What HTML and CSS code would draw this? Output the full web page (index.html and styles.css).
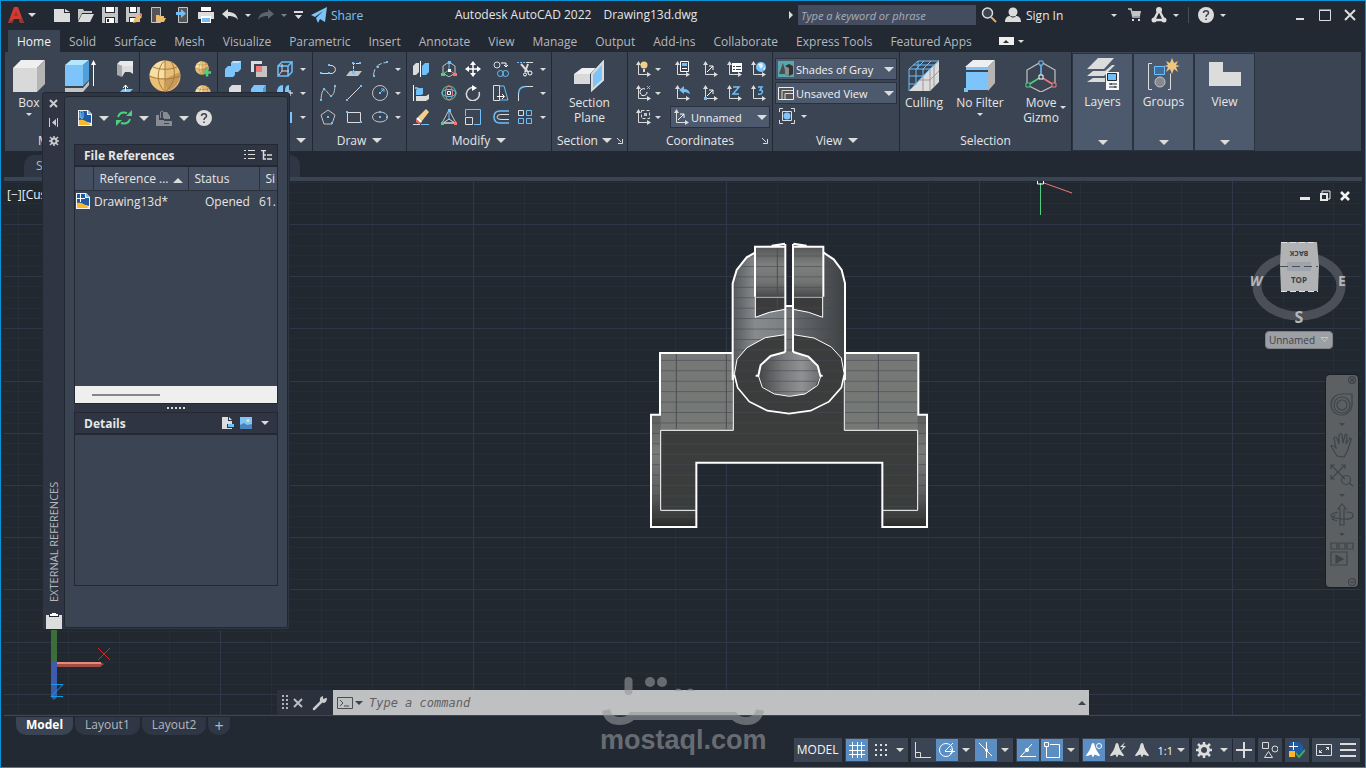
FILE: index.html
```html
<!DOCTYPE html>
<html lang="en">
<head>
    <meta charset="UTF-8">
    <meta name="viewport" content="width=device-width, initial-scale=1.0">
    <title>Autodesk AutoCAD 2022 - Drawing13d.dwg</title>
    <link rel="stylesheet" href="styles.css">
</head>
<body>
    <!-- shared icon shapes -->
    <svg class="defs" aria-hidden="true">
        <symbol id="axis" viewBox="0 0 16 16">
            <path d="M3.5 3v10.500h9.500" fill="none" stroke="#dcdcdc"/>
            <path d="M3.500 0l2.500 4h-5zM16 13.500l-4-2.500v5z" fill="#dcdcdc"/>
        </symbol>
        <symbol id="cube" viewBox="0 0 32 32">
            <path d="M0 8h24v24H0z" fill="#d9d9d9"/>
            <path d="M0 8L8 0h24l-8 8z" fill="#efefef"/>
            <path d="M24 8l8-8v24l-8 8z" fill="#b5b5b5"/>
        </symbol>
        <symbol id="globe" viewBox="0 0 32 32">
            <circle cx="16" cy="16" r="15.500" fill="#e9bf77"/>
            <path d="M16 .500C8 1 2 7 .500 15l7 3h9z" fill="#f6dfa4"/>
            <path d="M31 12c1 9-5 17-13 19l-2-12z" fill="#c89b5a"/>
            <path d="M.500 16c8 4 22 4 31 0M4 7c7 3 17 3 24 0M16 .500C7 8 7 24 16 31.500M16 .500v31M22 1c6 10 4 22-5 30" fill="none" stroke="#a97b3b"/>
        </symbol>
        <symbol id="person-a" viewBox="0 0 16 16">
            <path d="M8 0c2 0 2 4 3 6 1 3 3 5 5 8l-1 1-5-2c-1 0-1 3-2 3s-1-3-2-3l-5 2-1-1c2-3 4-5 5-8 1-2 1-6 3-6z"/>
        </symbol>
        <symbol id="dwg" viewBox="0 0 14 16">
            <path d="M0 0h10l4 4v12H0z" fill="#f2f2f2"/>
            <path d="M1 1h8v4h4v8L1 10z" fill="#1f5ba4"/>
            <path d="M1 10c4-1 8 1 12 5H1z" fill="#fdb827"/>
            <path d="M10 0l4 4h-4z" fill="#8ab8e6"/>
        </symbol>
    </svg>

    <div class="app">
        <header class="titlebar">
            <div class="quick">
                <button class="logo" aria-label="Application menu">
                    <svg width="16" height="17" viewBox="0 0 16 17"><path d="M0 16L6 0h4l6 16h-4l-1-4H6l-2 4z" fill="#d33a30"/><path d="M8 4l2 5H6zM0 16l3-3 3-1-2 4zM12 16l-1-4 3-1 2 5z" fill="#8c3a32"/></svg>
                    <i class="caret mid"></i>
                </button>
                <button aria-label="New"><svg width="16" height="16" viewBox="0 0 16 16"><path d="M0 2h10v4h6v9H0zM11 2l5 3h-5z" fill="#dcdcdc"/></svg></button>
                <button aria-label="Open"><svg width="16" height="16" viewBox="0 0 16 16"><path d="M0 14V2h5l1 2h8v2H4z" fill="#c4c4c4"/><path d="M4 7h12l-4 8H0z" fill="#dcdcdc"/></svg></button>
                <button aria-label="Save"><svg width="16" height="16" viewBox="0 0 16 16"><path d="M0 0h16v16H0z" fill="#c4c4c4"/><path d="M3 0h10v6H3zM3 10h10v6H3z" fill="#222933"/><path d="M4 0h8v5H4zM4 11h8v5H4z" fill="#fff"/><path d="M5 12h2v3H5z" fill="#222933"/></svg></button>
                <button aria-label="Save as"><svg width="16" height="16" viewBox="0 0 16 16"><path d="M0 0h14v15H0z" fill="#c4c4c4"/><path d="M3 0h8v6H3zM3 10h8v6H3z" fill="#222933"/><path d="M4 0h6v5H4zM4 11h5v4H4z" fill="#fff"/><path d="M7 16l1-4 5-5 3 3-5 5z" fill="#eebb6c"/><path d="M13 7l3 3 1-2-2-2z" fill="#f27878"/></svg></button>
                <button aria-label="Open from mobile"><svg width="16" height="16" viewBox="0 0 16 16"><path d="M1.500.500h9v15h-9z" fill="#555" stroke="#c4c4c4"/><path d="M6 15V8h3l1 1h4v2h2l-2 4z" fill="#eebb6c"/></svg></button>
                <button aria-label="Save to mobile"><svg width="16" height="16" viewBox="0 0 16 16"><path d="M4.500.500h9v15h-9z" fill="#555" stroke="#c4c4c4"/><path d="M2 5h5V2l5 4.500L7 11V8H2z" fill="#6fbff9"/></svg></button>
                <button aria-label="Plot"><svg width="16" height="16" viewBox="0 0 16 16"><path d="M3 0h10v4H3z" fill="#fff"/><path d="M0 5h16v7H0z" fill="#dcdcdc"/><path d="M3 9h10v7H3z" fill="#fff"/><path d="M4 11h8v4H4z" fill="#6fbff9"/></svg></button>
                <button aria-label="Undo"><svg width="16" height="16" viewBox="0 0 16 16"><path d="M0 7l6-5v3c5 0 9 2 10 8-2-3-5-4-10-4v3z" fill="#dcdcdc"/></svg></button>
                <button aria-label="Undo list" class="slim"><i class="caret mini"></i></button>
                <button aria-label="Redo"><svg width="16" height="16" viewBox="0 0 16 16"><path d="M16 7l-6-5v3C5 5 1 7 0 13c2-3 5-4 10-4v3z" fill="#5d646e"/></svg></button>
                <button aria-label="Redo list" class="slim"><i class="caret mini dim"></i></button>
                <button aria-label="Customize"><svg width="9" height="8" viewBox="0 0 9 8"><path d="M0 0h9v2H0zM1 4h7L4.500 8z" fill="#dcdcdc"/></svg></button>
                <button class="share"><svg width="16" height="16" viewBox="0 0 16 16"><path d="M0 8L16 0l-2 15-5-3-2 4-2-5 7-7-8 6z" fill="#7cc4f5"/></svg>Share</button>
            </div>
            <h1><span>Autodesk AutoCAD 2022</span><span>Drawing13d.dwg</span></h1>
            <div class="search">
                <i class="caret-right"></i>
                <input type="text" aria-label="Search help" placeholder="Type a keyword or phrase">
                <button aria-label="Search"><svg width="16" height="16" viewBox="0 0 16 16"><circle cx="6.500" cy="6" r="5" fill="#3c4450" stroke="#dcdcdc" stroke-width="1.500"/><path d="M10 10l5 5" stroke="#e9a85a" stroke-width="2"/></svg></button>
            </div>
            <button class="signin"><svg width="16" height="16" viewBox="0 0 16 16"><circle cx="8" cy="5" r="4.500" fill="#dcdcdc"/><path d="M0 15c0-5 3-6 5-6 2 2 4 2 6 0 2 0 5 1 5 6z" fill="#dcdcdc"/></svg><span>Sign In</span><i class="caret mini"></i></button>
            <div class="account">
                <button aria-label="App store"><svg width="14" height="14" viewBox="0 0 14 14"><path d="M0 1h3l2 8h7" fill="none" stroke="#c4c4c4" stroke-width="1.500"/><path d="M4 3h9l-1 5H5z" fill="#c4c4c4"/><path d="M4 11h2v2H4zM10 11h2v2h-2z" fill="#dcdcdc"/></svg></button>
                <button aria-label="Stay connected"><svg width="16" height="16" viewBox="0 0 16 16"><path d="M8 3L3 13h10z" fill="none" stroke="#dcdcdc" stroke-width="2.500"/><circle cx="8" cy="3" r="3" fill="#dcdcdc"/><circle cx="3" cy="13" r="2.500" fill="#dcdcdc"/><circle cx="13" cy="13" r="2.500" fill="#dcdcdc"/></svg><i class="caret mini"></i></button>
                <button aria-label="Help" class="help"><svg width="16" height="16" viewBox="0 0 16 16"><circle cx="8" cy="8" r="8" fill="#dcdcdc"/><path d="M5.500 6c0-3 5-3 5 0 0 2-2.500 1.500-2.500 4M8 11.500v1.500" fill="none" stroke="#3c4450" stroke-width="1.500"/></svg><i class="caret mini"></i></button>
            </div>
            <div class="window">
                <button aria-label="Minimize"><svg width="12" height="12" viewBox="0 0 12 12"><path d="M2 9h8v2H2z" fill="#dcdcdc"/></svg></button>
                <button aria-label="Maximize"><svg width="12" height="12" viewBox="0 0 12 12"><path d="M.500 1.500h11v10H.500zM0 1h12" fill="none" stroke="#dcdcdc"/></svg></button>
                <button aria-label="Close"><svg width="12" height="12" viewBox="0 0 12 12"><path d="M1 1l10 10M11 1L1 11" stroke="#dcdcdc" stroke-width="2"/></svg></button>
            </div>
        </header>

        <nav class="tabs">
            <a href="#home" class="active">Home</a>
            <a href="#solid">Solid</a>
            <a href="#surface">Surface</a>
            <a href="#mesh">Mesh</a>
            <a href="#visualize">Visualize</a>
            <a href="#parametric">Parametric</a>
            <a href="#insert">Insert</a>
            <a href="#annotate">Annotate</a>
            <a href="#view">View</a>
            <a href="#manage">Manage</a>
            <a href="#output">Output</a>
            <a href="#addins">Add-ins</a>
            <a href="#collaborate">Collaborate</a>
            <a href="#express">Express Tools</a>
            <a href="#featured">Featured Apps</a>
            <button class="collapse" aria-label="Minimize ribbon"><b><i class="caret-up"></i></b><i class="caret mini"></i></button>
        </nav>

        <div class="ribbon">
            <section class="panel modeling">
                <div class="body">
                    <button class="big"><svg width="32" height="32"><use href="#cube"/></svg>Box<i class="caret mini"></i></button>
                    <button class="big" aria-label="Extrude"><svg width="32" height="32" viewBox="0 0 32 32"><path d="M0 5h18v21H0z" fill="#7cc4f9"/><path d="M0 5l6-5h18l-6 5z" fill="#b4e7fb"/><path d="M18 5l6-5v20l-6 6z" fill="#4f9fd8"/><path d="M0 28h18l6-7v4l-6 7H0z" fill="#c4c4c4"/><path d="M28.500 26V3" stroke="#fff"/><path d="M28.500 0l2.500 5h-5z" fill="#fff"/></svg></button>
                    <div class="tools one">
                        <button aria-label="Polysolid"><svg width="16" height="16" viewBox="0 0 16 16"><path d="M0 3l5 2v11l-5-2z" fill="#a8a8a8"/><path d="M5 5h11v8l-3-2H8l-3 5z" fill="#dcdcdc"/><path d="M0 3l3-3h13v5H5z" fill="#e9e9e9"/></svg></button>
                        <button aria-label="Presspull"><svg width="16" height="16" viewBox="0 0 16 16"><path d="M2 8l4-4h10l-4 4v8H2z" fill="#7cc4f9"/><path d="M8.500 0v6M6 3l2.500-3L11 3" stroke="#fff" fill="none"/></svg></button>
                    </div>
                </div>
                <h2>Modeling<i class="caret"></i></h2>
            </section>

            <section class="panel mesh">
                <div class="body">
                    <button class="big" aria-label="Mesh sphere"><svg width="32" height="32"><use href="#globe"/></svg></button>
                    <div class="tools one">
                        <button aria-label="Smooth more"><svg width="16" height="16" viewBox="0 0 16 16"><use href="#globe" width="14" height="14"/><path d="M8 11.500h8M12 7.500v8" stroke="#4fd07c" stroke-width="2.500"/></svg></button>
                        <button aria-label="Smooth less"><svg width="16" height="16"><use href="#globe" width="16" height="16"/></svg></button>
                    </div>
                </div>
                <h2>Mesh<i class="caret"></i></h2>
            </section>

            <section class="panel solids">
                <div class="body tools">
                    <button aria-label="Union"><svg width="16" height="16" viewBox="0 0 16 16"><path d="M0 8l3-3h3V2l2-2h8v8l-3 3h-3v3l-2 2H0z" fill="#7cc4f9"/><path d="M6 2l2-2h8l-2 2z" fill="#b4e7fb"/></svg></button>
                    <button aria-label="Intersect"><svg width="16" height="16" viewBox="0 0 16 16"><path d="M0 0h11v11H0z" fill="#dcdcdc"/><path d="M5 5h11v11H5z" fill="#c4c4c4"/><path d="M3 3h8v8H3z" fill="#3b4453"/><path d="M5 5h6v6H5z" fill="#f27878"/></svg></button>
                    <button aria-label="Extract edges"><svg width="16" height="16" viewBox="0 0 16 16"><path d="M1 5h10v10H1zM1 5l4-4h10l-4 4M15 1v10l-4 4" fill="none" stroke="#6fbff9" stroke-width="1.500"/><path d="M5 3v7h7M5 10l-3 4" stroke="#dcdcdc" fill="none"/></svg></button>
                    <i class="caret mini"></i>
                    <button aria-label="Subtract"><svg width="16" height="16" viewBox="0 0 16 16"><path d="M4 3l3-3h9v9l-3 3H4z" fill="#dcdcdc"/><path d="M0 8h8v8H0z" fill="#6fbff9"/></svg></button>
                    <button aria-label="Interfere"><svg width="16" height="16" viewBox="0 0 16 16"><path d="M0 4l3-4h12l-3 4v12H0z" fill="#7cc4f9"/><path d="M12 4l3-4v11l-3 5z" fill="#4f9fd8"/></svg></button>
                    <button aria-label="Fillet edge"><svg width="16" height="16" viewBox="0 0 16 16"><path d="M0 16V8q0-8 6-8v16zM8 16V6q0-6 4-6v16z" fill="#7cc4f9"/><path d="M10 8h6M13 5v6" stroke="#fff"/></svg></button>
                    <i class="caret mini"></i>
                    <button aria-label="Slice"><svg width="16" height="16"><use href="#cube" width="16" height="16"/></svg></button>
                    <button aria-label="Thicken"><svg width="16" height="16"><use href="#cube" width="16" height="16"/></svg></button>
                    <button aria-label="Shell"><svg width="16" height="16" viewBox="0 0 16 16"><path d="M0 3h15v11H0z" fill="#7cc4f9"/></svg></button>
                    <i class="caret mini"></i>
                </div>
                <h2 class="end"><i class="caret"></i></h2>
            </section>

            <section class="panel draw">
                <div class="body tools">
                    <button aria-label="Polyline"><svg width="16" height="16" viewBox="0 0 16 16"><path d="M0 12.500h9M9 4.500h3q3.500 1 3.500 4t-3.500 4H9" fill="none" stroke="#dcdcdc"/><path d="M0 11h2v2H0zM8 11h2v2H8zM8 3h2v2H8z" fill="#6fbff9"/></svg></button>
                    <button aria-label="3D polyline"><svg width="16" height="16" viewBox="0 0 16 16"><path d="M0 15l4-5h12l-4 5z" fill="#c4c4c4"/><path d="M7.500 12V2.500H14" fill="none" stroke="#dcdcdc" stroke-dasharray="3 1"/><path d="M6 10h3v3H6zM6 1h2v2H6zM13 1h2v2h-2z" fill="#6fbff9"/></svg></button>
                    <button aria-label="Arc"><svg width="16" height="16" viewBox="0 0 16 16"><path d="M1.500 15Q2 2 15 1.500" fill="none" stroke="#c4c4c4" stroke-dasharray="7 2"/><path d="M1 14h2v2H1zM5 5h2v2H5zM14 0h2v2h-2z" fill="#6fbff9"/></svg></button>
                    <i class="caret mini"></i>
                    <button aria-label="Spline"><svg width="16" height="16" viewBox="0 0 16 16"><path d="M1 15C2 0 6 5 8 8s6 6 7-7" fill="none" stroke="#c4c4c4"/><path d="M0 14h2v2H0zM3 3h2v2H3zM10 10h2v2h-2zM14 0h2v2h-2z" fill="#6fbff9"/></svg></button>
                    <button aria-label="Line"><svg width="16" height="16" viewBox="0 0 16 16"><path d="M1 15L15 1" stroke="#dcdcdc"/><path d="M0 14h2v2H0zM14 0h2v2h-2z" fill="#6fbff9"/></svg></button>
                    <button aria-label="Circle"><svg width="16" height="16" viewBox="0 0 16 16"><circle cx="8" cy="8" r="7.500" fill="none" stroke="#c4c4c4"/><path d="M8 8l4-4M9 4h3v3" fill="none" stroke="#6fbff9"/><path d="M7 7h2v2H7z" fill="#6fbff9"/></svg></button>
                    <i class="caret mini"></i>
                    <button aria-label="Polygon"><svg width="16" height="16" viewBox="0 0 16 16"><path d="M8 1l7 5-3 9H4L1 6z" fill="none" stroke="#c4c4c4"/><path d="M7 7h2v2H7zM11 13h2v2h-2z" fill="#6fbff9"/></svg></button>
                    <button aria-label="Rectangle"><svg width="16" height="16" viewBox="0 0 16 16"><path d="M1.500 3.500h13v10h-13z" fill="none" stroke="#dcdcdc"/><path d="M0 2h2v2H0zM14 12h2v2h-2z" fill="#6fbff9"/></svg></button>
                    <button aria-label="Ellipse"><svg width="16" height="16" viewBox="0 0 16 16"><ellipse cx="8" cy="8" rx="7.500" ry="5" fill="none" stroke="#c4c4c4"/><path d="M7 7h2v2H7zM7 2h2v2H7zM14 7h2v2h-2z" fill="#6fbff9"/></svg></button>
                    <i class="caret mini"></i>
                </div>
                <h2>Draw<i class="caret"></i></h2>
            </section>

            <section class="panel modify">
                <div class="body tools">
                    <button aria-label="3D mirror"><svg width="16" height="16" viewBox="0 0 16 16"><path d="M0 5l3-3h3v9l-3 3H0z" fill="#dcdcdc"/><path d="M9 5l3-3h4v9l-3 3H9z" fill="#6fbff9"/><path d="M7.500 0v16" stroke="#fff"/></svg></button>
                    <button aria-label="3D move"><svg width="16" height="16" viewBox="0 0 16 16"><path d="M8 1l6 4v7l-6 4-6-4V5z" fill="none" stroke="#c4c4c4"/><path d="M8 1v8" stroke="#6fbff9"/><path d="M8 9l-6 4" stroke="#4fd07c"/><path d="M8 9l6 4" stroke="#f27878"/><path d="M7 0h3v3H7z" fill="#6fbff9"/><path d="M0 12h4v3H0z" fill="#4fd07c"/><path d="M12 12h4v3h-4z" fill="#f27878"/><path d="M7 8h3v3H7z" fill="#fff"/></svg></button>
                    <button aria-label="Move"><svg width="16" height="16" viewBox="0 0 16 16"><path d="M8 2v12M2 8h12" stroke="#fff" stroke-width="1.500"/><path d="M8 0l3 4H5zM8 16l3-4H5zM0 8l4-3v6zM16 8l-4-3v6z" fill="#fff"/></svg></button>
                    <button aria-label="Copy"><svg width="16" height="16" viewBox="0 0 16 16"><circle cx="4" cy="4" r="3" fill="none" stroke="#dcdcdc"/><circle cx="7.500" cy="12.500" r="3" fill="none" stroke="#6fbff9"/><circle cx="12.500" cy="12.500" r="3" fill="none" stroke="#6fbff9"/><path d="M8 2h5v4M11 4l2 2 2-2" fill="none" stroke="#fff"/></svg></button>
                    <button aria-label="Trim"><svg width="16" height="16" viewBox="0 0 16 16"><path d="M0 1.500h8" stroke="#6fbff9" stroke-dasharray="2 1"/><path d="M9 1.500h7" stroke="#dcdcdc"/><path d="M4 3l7 8M11 3L8 11" stroke="#dcdcdc" stroke-width="2"/><circle cx="8" cy="13.500" r="1.500" fill="none" stroke="#fff"/><circle cx="13" cy="12" r="2" fill="none" stroke="#fff"/></svg></button>
                    <i class="caret mini"></i>
                    <button aria-label="3D align"><svg width="16" height="16" viewBox="0 0 16 16"><path d="M.500 0v16M2 3h3" stroke="#fff"/><path d="M3 5l2-2h5v6l-2 1H3z" fill="#6fbff9"/><path d="M3 11h10l3-2v5l-3 2H3z" fill="#dcdcdc"/></svg></button>
                    <button aria-label="3D rotate"><svg width="16" height="16" viewBox="0 0 16 16"><circle cx="8" cy="8" r="7" fill="none" stroke="#4fd07c"/><ellipse cx="8" cy="8" rx="3.500" ry="7" fill="none" stroke="#f27878"/><ellipse cx="8" cy="8" rx="7" ry="3.500" fill="none" stroke="#6fbff9"/><path d="M6.500 6.500h3v3h-3z" fill="none" stroke="#fff"/></svg></button>
                    <button aria-label="Rotate"><svg width="16" height="16" viewBox="0 0 16 16"><path d="M10 3A6.500 6.500 0 1 0 14 7" fill="none" stroke="#dcdcdc" stroke-width="1.500"/><path d="M7 0l5 3-5 3z" fill="#fff"/></svg></button>
                    <button aria-label="Stretch"><svg width="16" height="16" viewBox="0 0 16 16"><path d="M.500.500h6v15h-6z" fill="none" stroke="#dcdcdc"/><path d="M7 1h4l4 14H7" fill="none" stroke="#6fbff9"/><path d="M4 11.500h7M9 9l2.500 2.500L9 14" fill="none" stroke="#fff"/></svg></button>
                    <button aria-label="Fillet"><svg width="16" height="16" viewBox="0 0 16 16"><path d="M9 1.500h7M1.500 9v7" stroke="#dcdcdc"/><path d="M9 1.500Q1.500 1.500 1.500 9" fill="none" stroke="#6fbff9" stroke-width="1.500"/></svg></button>
                    <i class="caret mini"></i>
                    <button aria-label="Erase"><svg width="16" height="16" viewBox="0 0 16 16"><path d="M5 8l8-8 3 3-7 9z" fill="#f3cf8b"/><path d="M5 8l4 4-1 2-5-4z" fill="#fff"/><path d="M3 10l5 4-2 1-3-2z" fill="#ee6b60"/><path d="M0 15.500h7" stroke="#dcdcdc"/><path d="M8 15.500h8" stroke="#6fbff9"/></svg></button>
                    <button aria-label="3D scale"><svg width="16" height="16" viewBox="0 0 16 16"><path d="M8 1L1 14h14z" fill="none" stroke="#c4c4c4"/><path d="M8 2v8" stroke="#6fbff9"/><path d="M8 10l-6 4h12z" fill="none" stroke="#dcdcdc"/><path d="M7 0h3v3H7z" fill="#6fbff9"/><path d="M0 13h3v3H0z" fill="#4fd07c"/><path d="M13 13h3v3h-3z" fill="#f27878"/></svg></button>
                    <button aria-label="Scale"><svg width="16" height="16" viewBox="0 0 16 16"><path d="M.500 7V.500h15v15H9" fill="none" stroke="#6fbff9"/><path d="M.500 8.500h7v7h-7z" fill="none" stroke="#dcdcdc"/></svg></button>
                    <button aria-label="Offset"><svg width="16" height="16" viewBox="0 0 16 16"><path d="M16 2H7q-6 0-6 6t6 6h9" fill="none" stroke="#6fbff9" stroke-width="1.500"/><path d="M16 5.500H8q-4 0-4 2.500t4 2.500h8" fill="none" stroke="#dcdcdc"/></svg></button>
                    <button aria-label="Array"><svg width="16" height="16" viewBox="0 0 16 16"><path d="M1.500 1.500h5v5h-5z" fill="none" stroke="#dcdcdc"/><path d="M9.500 1.500h5v5h-5zM1.500 9.500h5v5h-5zM9.500 9.500h5v5h-5z" fill="none" stroke="#6fbff9"/></svg></button>
                    <i class="caret mini"></i>
                </div>
                <h2>Modify<i class="caret"></i></h2>
            </section>

            <section class="panel section">
                <div class="body">
                    <button class="big"><svg width="32" height="32" viewBox="0 0 32 32"><path d="M1 14h16v10H1z" fill="#d9d9d9"/><path d="M1 14l8-6h14l-6 6z" fill="#efefef"/><path d="M19 14L30 2v18L19 30z" fill="#7cc4f9" stroke="#dcdcdc" stroke-width="2"/></svg>Section<br>Plane</button>
                </div>
                <h2>Section<i class="caret"></i><svg class="launch" width="6" height="6" viewBox="0 0 6 6"><path d="M0 0l4 4M5.500 1v4.500H1" fill="none" stroke="#dcdcdc"/></svg></h2>
            </section>

            <section class="panel coords">
                <div class="body tools">
                    <button aria-label="UCS icon"><svg width="16" height="16" viewBox="0 0 16 16"><use href="#axis"/><circle cx="9" cy="4" r="3.500" fill="#f2cf86"/><path d="M8 8h2v3H8z" fill="#dcdcdc"/></svg></button>
                    <i class="caret mini"></i>
                    <button aria-label="UCS"><svg width="16" height="16" viewBox="0 0 16 16"><use href="#axis"/><path d="M6.500.500h8v10h-8z" fill="#3b4453" stroke="#fff"/><path d="M8 2h5v3H8z" fill="#6fbff9"/><path d="M8 7.500h5" stroke="#fff"/></svg></button>
                    <button aria-label="UCS view"><svg width="16" height="16" viewBox="0 0 16 16"><use href="#axis"/><path d="M5 11l6-6M7 5h4v4" fill="none" stroke="#fff"/></svg></button>
                    <button aria-label="Named UCS"><svg width="16" height="16" viewBox="0 0 16 16"><use href="#axis"/><path d="M6 2h10v9H6z" fill="#fff"/><path d="M7 5.500h2M10 5.500h5M7 8.500h2M10 8.500h5" stroke="#3b4453"/></svg></button>
                    <button aria-label="World UCS"><svg width="16" height="16" viewBox="0 0 16 16"><use href="#axis"/><circle cx="11" cy="6" r="5" fill="#7cc4f9"/><path d="M8 3l4-1 1 3-2 3zM13 8l2-2v3z" fill="#dff3fd"/></svg></button>
                    <button aria-label="Rotate UCS"><svg width="16" height="16" viewBox="0 0 16 16"><use href="#axis"/><path d="M10 4a3.500 3.500 0 1 0 2 3" fill="none" stroke="#fff"/><path d="M12 1l3 3M15 1l-3 3" stroke="#6fbff9"/></svg></button>
                    <i class="caret mini"></i>
                    <button aria-label="Previous UCS"><svg width="16" height="16" viewBox="0 0 16 16"><use href="#axis"/><path d="M5 5l5-4v3q5 0 6 5-3-2-6-2v2z" fill="#6fbff9"/></svg></button>
                    <button aria-label="Origin"><svg width="16" height="16" viewBox="0 0 16 16"><use href="#axis"/><path d="M5 11l6-6M7 5h4v4" fill="none" stroke="#fff"/><path d="M2 12h3v3H2z" fill="#6fbff9"/></svg></button>
                    <button aria-label="Z axis"><svg width="16" height="16" viewBox="0 0 16 16"><use href="#axis"/><path d="M7 2h6L7 9h6" fill="none" stroke="#6fbff9" stroke-width="1.500"/></svg></button>
                    <button aria-label="3 point"><svg width="16" height="16" viewBox="0 0 16 16"><use href="#axis"/><path d="M8 2h4L10 5c4 0 3 5-2 4" fill="none" stroke="#6fbff9" stroke-width="1.500"/></svg></button>
                    <button aria-label="UCS object"><svg width="16" height="16" viewBox="0 0 16 16"><use href="#axis"/><path d="M6.500 1.500h8v8h-8z" fill="none" stroke="#dcdcdc" stroke-dasharray="3 2"/><path d="M9 4h3v3H9z" fill="#c4c4c4"/></svg></button>
                    <i class="caret mini"></i>
                    <label class="combo"><svg width="16" height="16" viewBox="0 0 16 16"><use href="#axis"/><path d="M5 11l6-6M7 5h4v4" fill="none" stroke="#fff"/></svg><select aria-label="UCS name"><option>Unnamed</option></select><i class="caret"></i></label>
                </div>
                <h2>Coordinates<svg class="launch" width="6" height="6" viewBox="0 0 6 6"><path d="M0 0l4 4M5.500 1v4.500H1" fill="none" stroke="#dcdcdc"/></svg></h2>
            </section>

            <section class="panel views">
                <div class="body">
                    <label class="combo"><svg width="16" height="16" viewBox="0 0 16 16"><path d="M0 0h16v16H0z" fill="#58a6ae"/><path d="M1 13L5 2l3 11z" fill="#4b4d4f"/><path d="M7 5l4-2 4 2v8l-4 2-4-2z" fill="#333"/><path d="M7 5l4 2v8l-4-2z" fill="#8b8b8b"/></svg><select aria-label="Visual style"><option>Shades of Gray</option></select><i class="caret"></i></label>
                    <label class="combo"><svg width="16" height="16" viewBox="0 0 16 16"><path d="M.500 2.500h15v12H.500z" fill="#555" stroke="#efefef"/><path d="M4 14V5.500h11M7 14V8.500h8" fill="none" stroke="#dcdcdc"/></svg><select aria-label="View name"><option>Unsaved View</option></select><i class="caret"></i></label>
                    <button class="iso" aria-label="Isolate"><svg width="16" height="16" viewBox="0 0 16 16"><path d="M.500 4V.500H4M12 .500h3.500V4M15.500 12v3.500H12M4 15.500H.500V12M3.500 3.500h9v9h-9z" fill="none" stroke="#dcdcdc"/><circle cx="8" cy="8" r="3.500" fill="#7cc4f9"/></svg><i class="caret mini"></i></button>
                </div>
                <h2>View<i class="caret"></i></h2>
            </section>

            <section class="panel selection">
                <div class="body">
                    <button class="big"><svg width="32" height="32" viewBox="0 0 32 32"><path d="M22 9L1 31h21zM22 9l9-9v22l-9 9z" fill="#dcdcdc"/><path d="M1 9h21v0L1 31zM1 9l9-8h21l-9 8M8 9v16M15 9v8M1 16h14M1 24h7M8 9l8-8M15 9l8-8M5 5h21M10 1v8" fill="none" stroke="#6fbff9"/><path d="M22 9v22M15 17v14M12 20h10l9-9M26 5v22" fill="none" stroke="#9a9a9a"/></svg>Culling</button>
                    <button class="big"><svg width="32" height="32" viewBox="0 0 32 32"><path d="M1 7l8-7h22l-7 7z" fill="#efefef"/><path d="M24 7l7-7v23l-7 8z" fill="#b5b5b5"/><path d="M2 7h22v3H2zM2 12h22v18H2zM0 28h4v4H0z" fill="#7cc4f9"/></svg>No Filter<i class="caret mini"></i></button>
                    <button class="big"><svg width="32" height="32" viewBox="0 0 32 32"><path d="M16 2l14 8v15l-14 7-14-7V10z" fill="none" stroke="#c4c4c4" stroke-width="1.200"/><path d="M16 4v12" stroke="#6fbff9" stroke-width="1.500"/><path d="M16 17L3 25" stroke="#4fd07c" stroke-width="1.500"/><path d="M16 17l13 8" stroke="#f27878" stroke-width="1.500"/><g fill="#3b4453"><path d="M14 1h4v4h-4z" stroke="#6fbff9"/><path d="M1 23h4v4H1z" stroke="#4fd07c"/><path d="M27 23h4v4h-4z" stroke="#f27878"/><path d="M14 15h4v4h-4z" stroke="#fff"/></g></svg>Move<br>Gizmo<i class="caret mini side"></i></button>
                </div>
                <h2>Selection</h2>
            </section>

            <button class="folded"><svg width="32" height="32" viewBox="0 0 32 32"><path d="M0 11L11 0h16L17 11zM0 18l6-5h12l7-6h3L17 18zM0 24l6-4h12v4z" fill="#dcdcdc"/><path d="M19 14h13v18H19z" fill="#f6f6f6"/><path d="M20.500 15.500h9v7h-9z" fill="#6fbff9" stroke="#222933"/><path d="M22 26h8M22 29h8M24 25v2M28 28v2" stroke="#222933"/></svg>Layers<i class="caret"></i></button>
            <button class="folded"><svg width="32" height="32" viewBox="0 0 32 32"><path d="M4 5.500H.500v26H4M20 31.500h2.500v-16" fill="none" stroke="#dcdcdc"/><path d="M6.500 8.500h10v8h-10z" fill="#3f6d9e" stroke="#6fbff9"/><circle cx="12" cy="24" r="5" fill="#868a8f" stroke="#c4c4c4"/><path d="M24 0l2 5 4-2-2 4 4 1-4 1 2 5-4-3-2 5-2-5-4 3 2-5-4-1 4-1-2-4 4 2z" fill="#f0c67e"/></svg>Groups<i class="caret"></i></button>
            <button class="folded"><svg width="32" height="32" viewBox="0 0 32 32"><path d="M0 4h14v10h18v14H0z" fill="#dcdcdc"/></svg>View<i class="caret"></i></button>
        </div>

        <div class="filetabs">
            <a href="#start">Start</a>
            <a href="#drawing13d" class="current" aria-label="Drawing13d"></a>
            <button aria-label="New drawing">+</button>
        </div>

        <main class="viewport">
            <svg class="grid" width="100%" height="100%">
                <defs>
                    <pattern id="lines" x="216" y="43" width="253" height="261" patternUnits="userSpaceOnUse">
                        <path d="M51 0h1v261h-1zM101 0h1v261h-1zM152 0h1v261h-1zM202 0h1v261h-1z" fill="#272e39"/>
                        <path d="M0 10h253M0 21h253M0 31h253M0 42h253M0 62h253M0 73h253M0 84h253M0 94h253M0 114h253M0 125h253M0 136h253M0 146h253M0 167h253M0 177h253M0 188h253M0 199h253M0 219h253M0 229h253M0 240h253M0 251h253" transform="translate(0 .5)" stroke="#262d38"/>
                        <path d="M0 0h253v1H0zM0 52h253v1H0zM0 104h253v1H0zM0 157h253v1H0zM0 209h253v1H0zM0 0h1v261H0z" fill="#303748"/>
                    </pattern>
                </defs>
                <rect width="100%" height="100%" fill="url(#lines)"/>
            </svg>

            <!-- crosshair -->
            <svg class="cross" width="36" height="34" viewBox="0 0 36 34"><path d="M4.500 2v32" stroke="#4fd07c"/><path d="M8 2l28 10" stroke="#f27878"/><path d="M1.500 0v3h6V0" fill="none" stroke="#fff"/></svg>

            <!-- clamp bracket, front view -->
            <svg class="model" width="320" height="310" viewBox="0 0 960 930">
                <defs>
                    <linearGradient id="arch"><stop offset="0" stop-color="#56585b"/><stop offset=".2" stop-color="#888b8c"/><stop offset=".45" stop-color="#7d8082"/><stop offset=".58" stop-color="#62666a"/><stop offset=".8" stop-color="#505356"/><stop offset="1" stop-color="#3f4143"/></linearGradient>
                    <linearGradient id="lug" x2="0" y2="1"><stop offset="0" stop-color="#545556"/><stop offset=".35" stop-color="#7d7f7d"/><stop offset=".7" stop-color="#727473"/><stop offset="1" stop-color="#46474a"/></linearGradient>
                    <linearGradient id="bore"><stop offset="0" stop-color="#444547"/><stop offset=".4" stop-color="#777879"/><stop offset=".7" stop-color="#909192"/><stop offset="1" stop-color="#6c6d6e"/></linearGradient>
                    <linearGradient id="foot" x2="0" y2="1"><stop offset="0" stop-color="#5c5d5d"/><stop offset=".35" stop-color="#7a7b7b"/><stop offset=".7" stop-color="#5c5d5e"/><stop offset="1" stop-color="#292a29"/></linearGradient>
                    <pattern id="rules" x="0" y="14" width="960" height="31.300" patternUnits="userSpaceOnUse"><path d="M0 0h960v3H0z" fill="#434855" opacity=".6"/></pattern>
                    <clipPath id="solid"><path d="M62 554h28V368h218V160l12-40 30-38 24-14V50l50-7h41v184h22V40l94 10v18l54 52 10 40v208h222v186h27v337H756V698H199v193H62z"/></clipPath>
                </defs>
                <path d="M308 480V160l12-40 30-38 25-14V50h90v177h22V50h93v18l30 20 25 32 12 40v320z" fill="url(#arch)"/>
                <path d="M375 50h90v152h-90zM490 50h90v152h-90z" fill="url(#lug)"/>
                <path d="M376 202h89v36q-50 4-89 24zM490 202h88v60q-40-20-88-24z" fill="#3a3b3a"/>
                <path d="M466 228h24v140h-24z" fill="#6e7071"/>
                <path d="M90 368h220v233H90zM645 368h220v233H645z" fill="#767876"/>
                <path d="M62 554h30v287h107v50H62zM863 554h29v337H756v-50h107z" fill="url(#foot)"/>
                <path d="M312 433h331v168h220v240H757V698H197v143H92V601h220z" fill="#3b3d3c"/>
                <path d="M313 433l8-45 30-35 55-30 59-9v50l-50 17-28 32-5 25 12 35 36 20 46 6 46-6 38-26 12-30-6-28-30-30-46-18v-47l62 10 55 27 25 33 12 49-10 40-37 42-55 27-65 8-66-8-55-27-33-35z" fill="#3b3d3c"/>
                <path d="M385 437l3-30 28-30 50-12h24l50 15 28 30 3 27-17 37-35 20-42 4-46-6-32-25z" fill="url(#bore)"/>
                <rect width="960" height="930" fill="url(#rules)" clip-path="url(#solid)"/>
                <path d="M139 368v230M745 368v230M289 368v230M442 52v180" stroke="#4b4e55" stroke-width="3"/>
                <g fill="none" stroke="#fff" stroke-width="3">
                    <path d="M376 202h89M490 202h89" stroke="#b5b5b5"/>
                    <path d="M376 200v62q40-18 89-24M578 200v62q-40-18-88-24"/>
                    <path d="M310 433v168H92v240h105M643 433v168h220v240H757"/>
                    <path d="M313 433l8-45 30-35 55-30 59-9M490 314l62 10 52 27 30 33 9 49"/>
                    <path d="M385 437l12 35 36 20 46 7 46-7 38-26 10-30"/>
                </g>
                <g fill="none" stroke="#fff" stroke-width="6">
                    <path d="M308 450V160l12-40 30-38 25-14M581 68l30 20 24 32 10 40v290"/>
                    <path d="M375 200V50h91M580 200V50h-92M466 42v324M489 42v324M466 228h24M425 47l40-6M490 41l40 6"/>
                    <path d="M308 369H90v185H63v337h136V698h558v193h134V554h-26V369H646"/>
                    <path d="M466 366l-44 12-30 27-7 32h-8M489 366l46 14 28 27 8 30h7"/>
                    <path d="M313 433l10 40 35 42 54 27 65 9 65-9 55-27 37-42 9-40" stroke-width="5"/>
                </g>
            </svg>

            <!-- ucs icon -->
            <svg class="ucs" width="64" height="72" viewBox="0 0 64 72"><path d="M1 0h6v33H1z" fill="#3c6e3c"/><path d="M7 32h43l4 2-4 3H7z" fill="#a34d45"/><path d="M7 33h44" stroke="#e48a7c" stroke-width="2"/><path d="M1 32h6v35l-3 3-3-3z" fill="#3d5cae"/><path d="M48 18l12 12M60 18L48 30" stroke="#e0201c"/><path d="M1 54.500h12L1 66.500h12" fill="none" stroke="#0d9ee8"/></svg>

            <p class="viewlabel">[&minus;][Custom View]</p>

            <div class="doccontrols">
                <button aria-label="Minimize drawing"><svg width="12" height="12" viewBox="0 0 12 12"><path d="M1 7h10v3H1z" fill="#e6e6e6"/></svg></button>
                <button aria-label="Restore drawing"><svg width="12" height="12" viewBox="0 0 12 12"><path d="M3 3V1h8v8H9" fill="none" stroke="#e6e6e6"/><path d="M2 4h6v6H2z" fill="none" stroke="#e6e6e6" stroke-width="2"/></svg></button>
                <button aria-label="Close drawing"><svg width="12" height="12" viewBox="0 0 12 12"><path d="M2 2l8 8M10 2l-8 8" stroke="#f2f2f2" stroke-width="2.500"/></svg></button>
            </div>

            <svg class="viewcube" width="100" height="90" viewBox="0 0 100 90">
                <ellipse cx="50" cy="46" rx="42" ry="30" fill="none" stroke="#4b4f57" stroke-width="9"/>
                <path d="M32 2h36l2 24-1 25H32l-1-25z" fill="#b1b2b3"/>
                <path d="M38 22h24v9H38z" fill="#9fa3ab"/>
                <path d="M31 26.500h38" stroke="#4a4e55" stroke-dasharray="8 4"/>
                <path d="M32 2.500h36M32 51.500h37" stroke="#e0e0e0" stroke-dasharray="6 3"/>
                <g font-family="Open Sans, sans-serif" font-weight="700" text-anchor="middle">
                    <text x="50" y="17" font-size="7" fill="#3b3f46" transform="rotate(180 50 14)">BACK</text>
                    <text x="50" y="43" font-size="8" fill="#3b3f46">TOP</text>
                    <text x="7" y="46" font-size="14" font-style="italic" fill="#b5b7ba">W</text>
                    <text x="93" y="46" font-size="14" fill="#b5b7ba">E</text>
                    <text x="50" y="83" font-size="16" fill="#b5b7ba">S</text>
                </g>
            </svg>
            <button class="wcs">Unnamed<svg width="9" height="6" viewBox="0 0 9 6"><path d="M1 .500h7l-3.500 4z" fill="none" stroke="#c8c8b8"/></svg></button>

            <div class="navbar">
                <svg class="dot" width="8" height="8" viewBox="0 0 8 8"><circle cx="4" cy="4" r="3.500"/><path d="M2 2l4 4M6 2L2 6"/></svg>
                <button aria-label="Steering wheel" class="wheel"><svg width="24" height="24" viewBox="0 0 24 24"><path d="M12 1h10v11a10.500 10.500 0 1 1-10-11z"/><circle cx="12" cy="12" r="8"/><circle cx="12" cy="12" r="5"/></svg></button>
                <i class="caret mini"></i>
                <button aria-label="Pan"><svg width="24" height="26" viewBox="0 0 24 26"><path d="M7 24L1 14q1-2 5 2L4 6q1-2 3 0l2 6V3q2-3 3 0l1 8 2-8q2-2 2 1l-1 8 4-6q2 0 1 2l-4 12-3 5z"/></svg></button>
                <button aria-label="Zoom"><svg width="24" height="24" viewBox="0 0 24 24"><path d="M1 1l14 14M15 1L1 15M1 5V1h4M11 1h4v4M1 11v4h4M19 19l4 3" /><circle cx="16" cy="16" r="4.500"/></svg></button>
                <i class="caret mini"></i>
                <button aria-label="Orbit"><svg width="24" height="24" viewBox="0 0 24 24"><path d="M12 1l4 5h-2v16h-4V6H8zM8 9q-8 2-7 4t11 3 11-3-7-4M5 12l-3 4 5 2"/></svg></button>
                <i class="caret mini"></i>
                <button aria-label="Show motion"><svg width="24" height="24" viewBox="0 0 24 24"><path d="M1 1h6v6H1zM9 1h6v6H9zM17 1h6v6h-6zM1 10h16v13H1z"/><path d="M6 13l7 4-7 4z" class="play"/></svg></button>
                <svg class="dot last" width="8" height="8" viewBox="0 0 8 8"><circle cx="4" cy="4" r="3.500"/><path d="M2 4h4"/></svg>
            </div>

            <div class="cmdline">
                <i class="grip"></i>
                <button aria-label="Close command line"><svg width="10" height="10" viewBox="0 0 10 10"><path d="M1 1l8 8M9 1L1 9" stroke="#b9bcc0" stroke-width="2"/></svg></button>
                <button aria-label="Customize command line"><svg width="16" height="16" viewBox="0 0 16 16"><path d="M2 14l7-7" stroke="#c9cbcd" stroke-width="2.500" stroke-linecap="round"/><path d="M14 3l-3 1V1q-4 1-3 5l3 2q4 0 4-5z" fill="#c9cbcd"/></svg></button>
                <div class="field">
                    <svg width="16" height="12" viewBox="0 0 16 12"><path d="M.500.500h15v11H.500z" fill="none" stroke="#4a4d52"/><path d="M3 3l3 3-3 3M7 9h5" fill="none" stroke="#4a4d52"/></svg>
                    <i class="caret mid"></i>
                    <input type="text" aria-label="Command" placeholder="Type a command">
                    <i class="caret-up"></i>
                </div>
            </div>
        </main>

        <div class="layouts">
            <a href="#model" class="current">Model</a>
            <a href="#layout1">Layout1</a>
            <a href="#layout2">Layout2</a>
            <button aria-label="New layout">+</button>
        </div>

        <footer class="status">
            <div class="group"><button class="text">MODEL</button></div>
            <div class="group">
                <button class="on" aria-label="Grid"><svg width="16" height="16" viewBox="0 0 16 16"><path d="M3.500 0v16M8.500 0v16M12.500 0v16M0 3.500h16M0 8.500h16M0 12.500h16" stroke="#fff"/></svg></button>
                <button aria-label="Snap"><svg width="14" height="14" viewBox="0 0 14 14"><path d="M1 2h12M1 7h12M1 12h12" stroke="#dcdcdc" stroke-width="2" stroke-dasharray="2 3"/></svg></button>
                <button class="drop" aria-label="Snap options"><i class="caret mid"></i></button>
            </div>
            <div class="group">
                <button aria-label="Ortho"><svg width="16" height="16" viewBox="0 0 16 16"><path d="M.500 0v15.500H16M.500 10.500h5v5" fill="none" stroke="#dcdcdc"/></svg></button>
                <button class="on" aria-label="Polar"><svg width="16" height="16" viewBox="0 0 16 16"><circle cx="7" cy="8" r="6.500" fill="none" stroke="#fff"/><path d="M6 9.500h10M6 9l8-8M11 7l3 2.500L11 12" fill="none" stroke="#fff"/></svg></button>
                <button class="drop" aria-label="Polar options"><i class="caret mid"></i></button>
                <button class="on" aria-label="Isodraft"><svg width="16" height="16" viewBox="0 0 16 16"><path d="M1 1l13 13M8.500 0v16" stroke="#fff"/><circle cx="8.500" cy="8" r="1.500" fill="#fff"/></svg></button>
                <button class="drop" aria-label="Isodraft options"><i class="caret mid"></i></button>
            </div>
            <div class="group">
                <button class="on" aria-label="Object snap tracking"><svg width="16" height="16" viewBox="0 0 16 16"><path d="M0 14.500h16M1 14L12 2" stroke="#fff"/><circle cx="7" cy="8" r="2" fill="#fff"/></svg></button>
                <button class="on" aria-label="Object snap"><svg width="16" height="16" viewBox="0 0 16 16"><path d="M2.500 5v10.500h13V2.500H6M.500.500h4v4h-4z" fill="none" stroke="#fff"/></svg></button>
                <button class="drop" aria-label="Object snap options"><i class="caret mid"></i></button>
            </div>
            <div class="group">
                <button class="on" aria-label="Annotation visibility"><svg width="16" height="16" fill="#fff"><use href="#person-a" width="14" height="16"/><circle cx="13" cy="4" r="2.500" fill="#5b8fc4" stroke="#fff"/></svg></button>
                <button aria-label="Autoscale"><svg width="16" height="16" fill="#dcdcdc"><use href="#person-a" width="14" height="16"/><path d="M15 0l-5 5h3l-2 4 5-5h-3z"/></svg></button>
                <button aria-label="Annotation scale"><svg width="14" height="16" fill="#dcdcdc"><use href="#person-a" width="14" height="16"/></svg></button>
                <button class="text scale">1:1<i class="caret mid"></i></button>
            </div>
            <div class="group">
                <button aria-label="Workspace"><svg width="16" height="16" viewBox="0 0 16 16"><circle cx="8" cy="8" r="4.500" fill="none" stroke="#dcdcdc" stroke-width="3"/><path d="M8 0v3M8 13v3M0 8h3M13 8h3M2 2l3 3M11 11l3 3M14 2l-3 3M5 11l-3 3" stroke="#dcdcdc" stroke-width="2.500"/></svg></button>
                <button class="drop" aria-label="Workspace options"><i class="caret mid"></i></button>
                <button class="split" aria-label="Annotation monitor"><svg width="16" height="16" viewBox="0 0 16 16"><path d="M8 0v16M0 8h16" stroke="#dcdcdc" stroke-width="2"/></svg></button>
            </div>
            <div class="group"><button aria-label="Isolate objects"><svg width="16" height="16" viewBox="0 0 16 16"><path d="M.500.500h6v6h-6zM6.500 9.500l4 6h-8z" fill="none" stroke="#dcdcdc"/><circle cx="13" cy="7" r="3" fill="none" stroke="#dcdcdc"/></svg></button></div>
            <div class="group"><button aria-label="Graphics performance"><svg width="16" height="16" viewBox="0 0 16 16"><path d="M1 0h9l4 4v7H1z" fill="#1f5ba4"/><path d="M4.500 0v8M0 4.500h9" stroke="#fff"/><path d="M0 9h6v6H0z" fill="#fdb827"/><path d="M7 11l3 4 6-7" fill="none" stroke="#3cab5a" stroke-width="2"/></svg></button></div>
            <div class="group">
                <button aria-label="Clean screen"><svg width="16" height="12" viewBox="0 0 16 12"><path d="M.500.500h15v11H.500z" fill="none" stroke="#dcdcdc"/><path d="M3 9l3-3M3.500 6v2.500H6M13 3l-3 3M10 3.500h2.500V6" fill="none" stroke="#dcdcdc"/></svg></button>
                <button aria-label="Customization"><svg width="16" height="14" viewBox="0 0 16 14"><path d="M0 1h16M0 7h16M0 13h16" stroke="#dcdcdc" stroke-width="2"/></svg></button>
            </div>
        </footer>

        <aside class="palette">
            <div class="strip">
                <button aria-label="Close palette"><svg width="9" height="9" viewBox="0 0 9 9"><path d="M1 1l7 7M8 1L1 8" stroke="#c9cbcd" stroke-width="2"/></svg></button>
                <button aria-label="Auto-hide"><svg width="9" height="9" viewBox="0 0 9 9"><path d="M.500 0v9M8.500 0v9" stroke="#c9cbcd"/><path d="M7 1v7L3 4.500z" fill="#c9cbcd"/></svg></button>
                <button aria-label="Properties"><svg width="10" height="10" viewBox="0 0 10 10"><circle cx="5" cy="5" r="2.500" fill="none" stroke="#c9cbcd" stroke-width="2"/><path d="M5 0v2M5 8v2M0 5h2M8 5h2M1 1l2 2M7 7l2 2M9 1L7 3M3 7L1 9" stroke="#c9cbcd" stroke-width="1.500"/></svg></button>
                <span class="caption">EXTERNAL REFERENCES</span>
                <svg width="16" height="16" viewBox="0 0 16 16"><path d="M0 2h16v14H0z" fill="#dcdcdc"/><path d="M3 2h10v2H3z" fill="#222933"/><path d="M4 1h8v2H4zM6 0h4v2H6z" fill="#fff"/></svg>
            </div>
            <div class="content">
                <div class="bar">
                    <button aria-label="Attach"><svg width="14" height="16"><use href="#dwg"/><path d="M2 8V2q2-2 3 0v6q-1 1-2 0V3" fill="none" stroke="#7cc4f9"/></svg><i class="caret"></i></button>
                    <button aria-label="Refresh"><svg width="16" height="16" viewBox="0 0 16 16"><path d="M2 7q2-6 9-4M14 9q-2 6-9 4" fill="none" stroke="#4fd07c" stroke-width="2"/><path d="M10 6h6V0zM6 10H0v6z" fill="#4fd07c"/></svg><i class="caret"></i></button>
                    <button aria-label="Change path"><svg width="16" height="16" viewBox="0 0 16 16"><path d="M0 5h3v5h5V2h3l3 4v3h-6v2h8v5H0z" fill="#888c92"/><path d="M4.500 8V2q2-2 3 0v6" fill="none" stroke="#888c92"/><path d="M8 13.500h5" stroke="#3b4453"/></svg><i class="caret"></i></button>
                    <button aria-label="Palette help"><svg width="16" height="16" viewBox="0 0 16 16"><circle cx="8" cy="8" r="8" fill="#dcdcdc"/><path d="M5.500 6c0-3 5-3 5 0 0 2-2.500 1.500-2.500 4M8 11.500v1.500" fill="none" stroke="#3c4450" stroke-width="1.500"/></svg></button>
                </div>
                <div class="box files">
                    <div class="head">
                        <h3>File References</h3>
                        <button aria-label="List view"><svg width="11" height="10" viewBox="0 0 11 10"><path d="M0 .500h2M0 4.500h2M0 8.500h2M4 .500h7M4 4.500h7M4 8.500h7" stroke="#dcdcdc"/></svg></button>
                        <button aria-label="Tree view"><svg width="11" height="10" viewBox="0 0 11 10"><path d="M0 .500h5M2.500 1v8H5M2.500 5H5M6 5h5M6 9h5" fill="none" stroke="#dcdcdc" stroke-width="1.500"/></svg></button>
                    </div>
                    <table>
                        <thead>
                            <tr><th class="icon"></th><th class="name">Reference ...<i class="caret-up"></i></th><th class="state">Status</th><th>Si</th></tr>
                        </thead>
                        <tbody>
                            <tr><td><svg width="14" height="16" viewBox="0 0 14 16"><use href="#dwg"/><path d="M4.500 1v8M1 5.500h8" stroke="#fff"/></svg></td><td>Drawing13d*</td><td class="opened">Opened</td><td class="size">61.</td></tr>
                        </tbody>
                    </table>
                    <div class="scroll"><i></i></div>
                </div>
                <div class="splitter"><i></i><i></i><i></i><i></i><i></i></div>
                <div class="box details">
                    <div class="head">
                        <h3>Details</h3>
                        <button aria-label="Details"><svg width="12" height="12" viewBox="0 0 12 12"><path d="M0 0h6v4h4v3H5v5H0zM7 0l3 3H7zM5 11h5v1H5z" fill="#dcdcdc"/><path d="M6 7h6v3H6z" fill="#6fbff9"/></svg></button>
                        <button aria-label="Preview"><svg width="12" height="12" viewBox="0 0 12 12"><path d="M0 0h12v12H0z" fill="#7cc4f9"/><path d="M0 12V8l4-2 3 2 5-1v5z" fill="#4b84bd"/><circle cx="8" cy="3.500" r="1.500" fill="#f6dfa4"/></svg></button>
                        <button class="more" aria-label="Details options"><i class="caret mid"></i></button>
                    </div>
                </div>
            </div>
        </aside>

        <div class="watermark">
            <svg width="166" height="50" viewBox="0 0 166 50"><g fill="none" stroke="#96999c"><path d="M28.500 9v10" stroke-width="8" stroke-linecap="round"/><path d="M6 38q2 11 14 11 8 0 12-5h102q4 5 12 5 12 0 14-11" stroke-width="8"/></g><g fill="#96999c"><circle cx="50" cy="10" r="5"/><circle cx="62" cy="10" r="5"/><path d="M74 19q4-5 9 0zM86 19q4-5 9 0z"/></g></svg>
            <span>mostaql.com</span>
        </div>
    </div>
</body>
</html>
```

FILE: styles.css
```css
* {
    box-sizing: border-box;
}
body {
    margin: 0;
    background: #222933;
    color: #e6e6e6;
    font-family: "Open Sans", "Noto Sans", sans-serif;
    font-size: 12px;
}
button {
    display: flex;
    align-items: center;
    justify-content: center;
    padding: 0;
    border: 0;
    background: none;
    color: inherit;
    font: inherit;
}
a {
    color: inherit;
    text-decoration: none;
}
h1, h2, h3, p {
    margin: 0;
    font-size: 12px;
    font-weight: 400;
}
svg {
    display: block;
    flex: none;
}
.defs {
    position: absolute;
    width: 0;
    height: 0;
}
.app {
    position: relative;
    display: flex;
    flex-direction: column;
    min-height: 100vh;
    border: 1px solid #0a93d6;
    overflow: hidden;
}

/* little triangles */
.caret, .caret-up, .caret-right {
    flex: none;
    width: 0;
    height: 0;
    border: 5px solid transparent;
    border-bottom-width: 0;
    border-top-color: #dcdcdc;
}
.caret.mid {
    border-width: 4px 4px 0;
}
.caret.mini {
    border-width: 3px 3px 0;
}
.caret.dim {
    border-top-color: #7a8088;
}
.caret-up {
    border-width: 0 4px 4px;
    border-bottom-color: #dcdcdc;
}
.caret-right {
    border-width: 4px 0 4px 4px;
    border-color: transparent transparent transparent #dcdcdc;
}

/* title bar */
.titlebar {
    display: flex;
    align-items: center;
    height: 29px;
    padding-bottom: 1px;
}
.quick {
    display: flex;
    align-items: center;
    gap: 8px;
    padding-left: 7px;
}
.quick .logo {
    gap: 4px;
    margin-right: 10px;
}
.quick .slim {
    width: 4px;
}
.share {
    gap: 4px;
    color: #7cc4f5;
}
h1 {
    display: flex;
    flex: 1;
    justify-content: center;
    gap: 12px;
    padding-bottom: 2px;
}
.search {
    display: flex;
    align-items: center;
    gap: 5px;
}
.search input {
    width: 178px;
    height: 20px;
    padding: 0 3px;
    border: 0;
    background: #444d5f;
    color: #e6e6e6;
    font: italic 11px "Open Sans", sans-serif;
}
.search input::placeholder {
    color: #a9aeb7;
    opacity: 1;
}
.signin {
    gap: 5px;
    width: 112px;
    margin-left: 8px;
}
.signin span {
    flex: 1;
    text-align: left;
}
.account {
    display: flex;
    gap: 9px;
    margin-left: 11px;
}
.account button {
    gap: 6px;
}
.account .help {
    padding-left: 9px;
    border-left: 1px solid #444d5f;
}
.window {
    display: flex;
    gap: 13px;
    margin: 0 9px 0 68px;
}

/* ribbon tabs */
.tabs {
    display: flex;
    align-items: stretch;
    height: 22px;
    padding-left: 7px;
    color: #b4b8be;
    line-height: 23px;
}
.tabs a {
    padding: 0 9px;
}
.tabs .active {
    background: #3b4453;
    color: #f2f2f2;
}
.collapse {
    gap: 4px;
    margin-left: 18px;
}
.collapse b {
    display: flex;
    align-items: center;
    justify-content: center;
    width: 15px;
    height: 8px;
    background: #efefef;
}
.collapse .caret-up {
    border-width: 0 3px 3px;
    border-bottom-color: #333;
}

/* ribbon */
.ribbon {
    display: flex;
    height: 99px;
    margin: 0 4px;
    background: #3b4453;
}
.panel {
    display: flex;
    flex: none;
    flex-direction: column;
    padding-top: 5px;
    border-right: 1px solid #222933;
}
.panel .body {
    display: flex;
    height: 72px;
}
.panel h2 {
    position: relative;
    display: flex;
    align-items: center;
    justify-content: center;
    gap: 6px;
    height: 22px;
}
.panel h2.end {
    justify-content: flex-end;
    padding-right: 6px;
}
.launch {
    position: absolute;
    right: 4px;
    bottom: 7px;
}
.panel .tools {
    display: grid;
    grid-auto-rows: 24px;
    align-items: center;
    justify-items: start;
    justify-content: start;
}
.tools.one {
    grid-template-columns: 16px;
}
.big {
    display: block;
    align-self: flex-start;
    padding-top: 3px;
    line-height: 15px;
    text-align: center;
}
.big svg {
    margin: 0 auto 3px;
}
.big .caret {
    display: block;
    margin: 3px auto 0;
}
.modeling {
    width: 135px;
}
.modeling .big {
    width: 48px;
}
.modeling .big + .big {
    margin-left: 4px;
}
.modeling .tools {
    margin-left: 12px;
}
.mesh {
    width: 78px;
}
.mesh .big {
    width: 50px;
}
.mesh .tools {
    margin-left: 5px;
}
.solids {
    width: 95px;
}
.solids .tools {
    padding-left: 7px;
}
.solids .tools, .draw .tools {
    grid-template-columns: 26px 26px 23px 6px;
}
.draw {
    width: 94px;
}
.draw .tools {
    padding-left: 7px;
}
.modify {
    width: 145px;
}
.modify .tools {
    grid-template-columns: 28px 24px 28px 24px 23px 6px;
    padding-left: 6px;
}
.section {
    width: 76px;
}
.section .body {
    justify-content: center;
}
.section h2 {
    gap: 4px;
    padding-right: 10px;
}
.coords {
    width: 145px;
}
.coords .tools {
    grid-template-columns: 20px 19px 28px 24px 24px 20px;
    padding-left: 7px;
}
.coords .combo {
    grid-column: 3 / 7;
    width: 100px;
    margin-left: -4px;
}
.views {
    width: 127px;
    padding-left: 2px;
}
.panel.views .body {
    flex-direction: column;
    align-items: flex-start;
    gap: 2px;
    padding-top: 1px;
}
.views .combo {
    width: 122px;
}
.iso {
    gap: 6px;
    margin: 2px 0 0 4px;
}
.combo {
    display: flex;
    align-items: center;
    height: 22px;
    padding: 0 2px;
    border: 1px solid #2a303c;
    background: #4d5a6d;
}
.combo select {
    flex: 1;
    width: 0;
    padding: 0 0 0 2px;
    border: 0;
    outline: 0;
    background: none;
    color: #f2f2f2;
    font: 11px "Open Sans", sans-serif;
    appearance: none;
}
.selection {
    width: 172px;
}
.panel.selection .body {
    display: grid;
    grid-template-columns: 48px 64px 58px;
}
.selection .big {
    position: relative;
}
.big .side {
    position: absolute;
    right: 4px;
    bottom: 16px;
}
.folded {
    flex-direction: column;
    justify-content: flex-start;
    width: 59px;
    height: 96px;
    margin: 2px 1px 0;
    padding: 4px 0 5px;
    background: #4d5a6d;
    box-shadow: 0 0 0 1px #2c3340;
}
.folded svg {
    margin-bottom: 3px;
}
.folded .caret {
    margin-top: auto;
}

/* drawing tabs */
.filetabs {
    display: flex;
    align-items: flex-end;
    height: 30px;
    margin: 0 3px;
    padding-left: 20px;
    border-bottom: 4px solid #3b4453;
    color: #b4b8be;
}
.filetabs a, .filetabs button {
    height: 22px;
    padding: 0 12px;
    border-radius: 10px 10px 0 0;
    background: #2f3644;
    line-height: 22px;
}
.filetabs .current {
    width: 190px;
    margin: 0 2px;
    background: #3b4453;
}

/* drawing area */
.viewport {
    position: relative;
    flex: 1;
    margin: 0 4px 0 3px;
    border-bottom: 1px solid #3f4651;
    background: #212830;
    overflow: hidden;
}
.grid {
    position: absolute;
    inset: 0;
}
.model {
    position: absolute;
    left: 626px;
    top: 49px;
}
.cross {
    position: absolute;
    left: 1032px;
    top: 0;
}
.ucs {
    position: absolute;
    left: 46px;
    bottom: 13px;
}
.viewlabel {
    position: absolute;
    left: 3px;
    top: 5px;
    color: #f2f2f2;
}
.doccontrols {
    position: absolute;
    right: 10px;
    top: 9px;
    display: flex;
    gap: 8px;
}
.viewcube {
    position: absolute;
    right: 12px;
    top: 59px;
}
.wcs {
    position: absolute;
    right: 28px;
    top: 150px;
    gap: 5px;
    width: 68px;
    height: 18px;
    border: 1px solid #7e8286;
    border-radius: 4px;
    background: #9c9fa3;
    color: #3f434a;
    font-size: 10px;
}
.navbar {
    position: absolute;
    right: 3px;
    top: 194px;
    display: flex;
    flex-direction: column;
    align-items: center;
    gap: 6px;
    width: 32px;
    height: 212px;
    padding: 1px 0;
    border-radius: 4px;
    background: #5c6063;
    box-shadow: 0 0 0 1px #1a1f26;
}
.navbar svg {
    fill: none;
    stroke: #3f4448;
    stroke-width: 1.2px;
}
.navbar .play {
    fill: #3f4448;
}
.navbar .caret {
    border-top-color: #3f4448;
}
.navbar .wheel {
    margin-top: 3px;
}
.navbar .dot {
    align-self: flex-end;
    margin-right: 2px;
}
.navbar .last {
    margin-top: auto;
}

.cmdline {
    position: absolute;
    left: 273px;
    right: 272px;
    bottom: 0;
    display: flex;
    align-items: center;
    gap: 5px;
    height: 25px;
    padding-left: 3px;
    background: #2b313d;
}
.grip {
    width: 8px;
    height: 16px;
    background: conic-gradient(#b0b3b8 25%, transparent 0) 0 0 / 4px 4px;
}
.cmdline button + button {
    margin: 0 0 0 4px;
}
.field {
    display: flex;
    flex: 1;
    align-items: center;
    gap: 2px;
    height: 25px;
    padding: 0 3px 0 4px;
    background: #bfc0c1;
}
.field .caret {
    border-top-color: #3f4448;
}
.field .caret-up {
    border-bottom-color: #3f4448;
}
.field input {
    flex: 1;
    height: 25px;
    padding: 0 4px;
    border: 0;
    background: none;
    font: italic 12px "DejaVu Sans Mono", monospace;
}
.field input::placeholder {
    color: #5f6164;
    opacity: 1;
}

/* layout tabs */
.layouts {
    display: flex;
    align-items: flex-start;
    height: 22px;
    padding: 1px 0 0 15px;
    color: #b4b8be;
}
.layouts a, .layouts button {
    height: 18px;
    margin-right: 2px;
    padding: 0 10px;
    border-radius: 0 0 10px 10px;
    background: #2f3644;
    line-height: 16px;
}
.layouts button {
    padding: 0 6px;
    font-size: 16px;
}
.layouts .current {
    background: #3b4453;
    color: #fff;
    font-weight: 700;
}

/* status bar */
.status {
    display: flex;
    justify-content: flex-end;
    gap: 3px;
    padding: 0 5px 5px 0;
}
.group {
    display: flex;
    align-items: center;
    gap: 2px;
    height: 24px;
    padding: 0 1px;
    background: #3b4453;
}
.group button {
    width: 22px;
    height: 22px;
}
.group .on {
    background: #5b8fc4;
}
.group .drop {
    width: 13px;
}
.group .text {
    width: auto;
    padding: 0 2px 2px;
    color: #f6f6f6;
}
.group .scale {
    gap: 4px;
    padding: 0 3px;
    font-size: 11px;
}
.group .split {
    border-left: 1px solid #222933;
}

/* external references palette */
.palette {
    position: absolute;
    left: 41px;
    top: 91px;
    display: flex;
    width: 248px;
    height: 538px;
    border: 1px solid #222933;
    border-radius: 3px;
    background: #2f3542;
}
.strip {
    display: flex;
    flex-direction: column;
    align-items: center;
    gap: 9px;
    width: 21px;
    padding-top: 5px;
}
.strip button {
    width: 16px;
    height: 10px;
}
.caption {
    flex: 1;
    margin-bottom: 2px;
    writing-mode: vertical-rl;
    transform: rotate(180deg);
    color: #b4b8be;
    font-size: 11px;
}
.content {
    display: flex;
    flex: 1;
    flex-direction: column;
    margin: 3px 1px 1px 0;
    padding: 13px 9px 41px;
    border: 1px solid #222933;
    border-radius: 3px;
    background: #3b4453;
}
.bar {
    display: flex;
    align-items: flex-start;
    gap: 7px;
    height: 34px;
    padding-left: 4px;
}
.bar button {
    gap: 7px;
}
.box {
    display: flex;
    flex-direction: column;
    border: 1px solid #222933;
    overflow: hidden;
}
.files {
    height: 260px;
}
.details {
    flex: 1;
}
.head {
    display: flex;
    align-items: center;
    gap: 6px;
    height: 22px;
    padding: 0 5px 0 9px;
    border-bottom: 2px solid #222933;
    background: #2f3542;
}
.head h3 {
    flex: 1;
    font-weight: 700;
}
.head .more {
    width: 14px;
}
.files table {
    width: 100%;
    border-collapse: collapse;
    table-layout: fixed;
}
.files th {
    height: 23px;
    padding: 0 0 0 6px;
    border: solid #2a303c;
    border-width: 0 0 1px 1px;
    background: #444e61;
    font-weight: 400;
    text-align: left;
}
.files th:first-child {
    border-left: 0;
}
.files .icon {
    width: 18px;
}
.files .name {
    width: 95px;
}
.files .state {
    width: 71px;
}
.files th .caret-up {
    display: inline-block;
    margin-left: 5px;
    border-width: 0 5px 5px;
}
.files td {
    height: 22px;
    padding: 0 0 0 1px;
}
.files .opened {
    padding-left: 17px;
}
.files .size {
    padding: 0;
}
.scroll {
    display: flex;
    align-items: center;
    height: 17px;
    margin-top: auto;
    padding-left: 17px;
    background: #efefef;
}
.scroll i {
    width: 68px;
    height: 2px;
    background: #868686;
}
.splitter {
    display: flex;
    align-items: center;
    justify-content: center;
    gap: 2px;
    height: 8px;
    background: #2f3542;
}
.splitter i {
    width: 2px;
    height: 2px;
    background: #dcdcdc;
}

.watermark {
    position: absolute;
    left: 50%;
    bottom: 9px;
    width: 166px;
    transform: translateX(-50%);
    color: #96999c;
    opacity: 0.6;
    font: 700 27px/36px "Liberation Sans", sans-serif;
    text-align: center;
    pointer-events: none;
}
.watermark svg {
    overflow: visible;
}
```
